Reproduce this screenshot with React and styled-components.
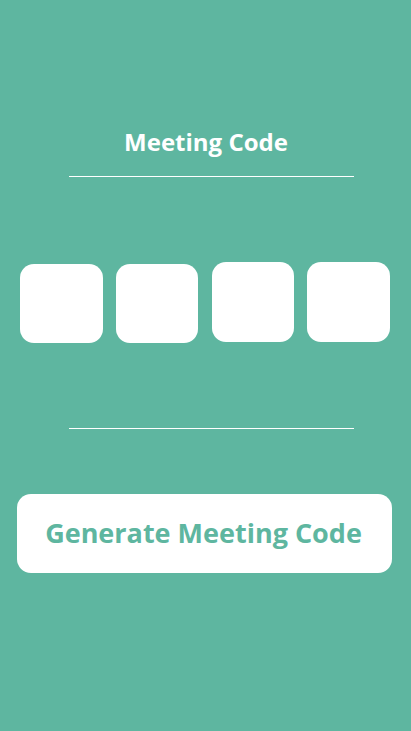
import React from 'react';
import styled, {createGlobalStyle} from 'styled-components';

const GlobalStyle = createGlobalStyle`
    html, body {
        margin: 0;
        padding: 0;
        background: #5EB6A0;
    }
    body {
        font-family: "Open Sans", "Liberation Sans", sans-serif;
    }
`

const codeBoxes = [
    {gap: 0, y: 264, w: 83, h: 79},
    {gap: 13, y: 264, w: 82, h: 79},
    {gap: 14, y: 262, w: 82, h: 80},
    {gap: 13, y: 262, w: 83, h: 80},
]

const App = () => {
    return (
        <Screen>
            <GlobalStyle />
            <Title>Meeting Code</Title>
            <Divider top={17} />
            <CodeRow>
                {
                    codeBoxes.map((box, index) => (
                        <CodeBox key={index} gap={box.gap} lift={box.y - 262} width={box.w} height={box.h} />
                    ))
                }
            </CodeRow>
            <Divider top={85} />
            <GenerateButton>Generate Meeting Code</GenerateButton>
        </Screen>
    )
}
export default App;

const Screen = styled.div`
    width: 411px;
    min-height: 731px;
    background: #5EB6A0;
    display: flex;
    flex-direction: column;
    padding-top: 125px;
    box-sizing: border-box;
`
const Title = styled.div`
    width: 411px;
    text-align: center;
    color: #FFFFFF;
    font-size: 24px;
    font-weight: 700;
    line-height: 34px;
    padding-left: 1px;
    box-sizing: border-box;
`
const Divider = styled.div`
    width: 285px;
    height: 1px;
    margin: ${props => props.top}px 0 0 69px;
    background: #FFFFFF;
`
const CodeRow = styled.div`
    display: flex;
    align-items: flex-start;
    height: 81px;
    margin: 85px 0 0 20px;
`
const CodeBox = styled.div`
    width: ${props => props.width}px;
    height: ${props => props.height}px;
    margin-top: ${props => props.lift}px;
    margin-left: ${props => props.gap}px;
    background: #FFFFFF;
    border-radius: 14px;
`
const GenerateButton = styled.button`
    width: 375px;
    height: 79px;
    margin: 65px 0 0 17px;
    border: none;
    border-radius: 14px;
    background: #FFFFFF;
    color: #5EB6A0;
    font-family: "Open Sans", "Liberation Sans", sans-serif;
    font-size: 27px;
    font-weight: 700;
    padding: 0 2px 2px 0;
    cursor: pointer;
`
